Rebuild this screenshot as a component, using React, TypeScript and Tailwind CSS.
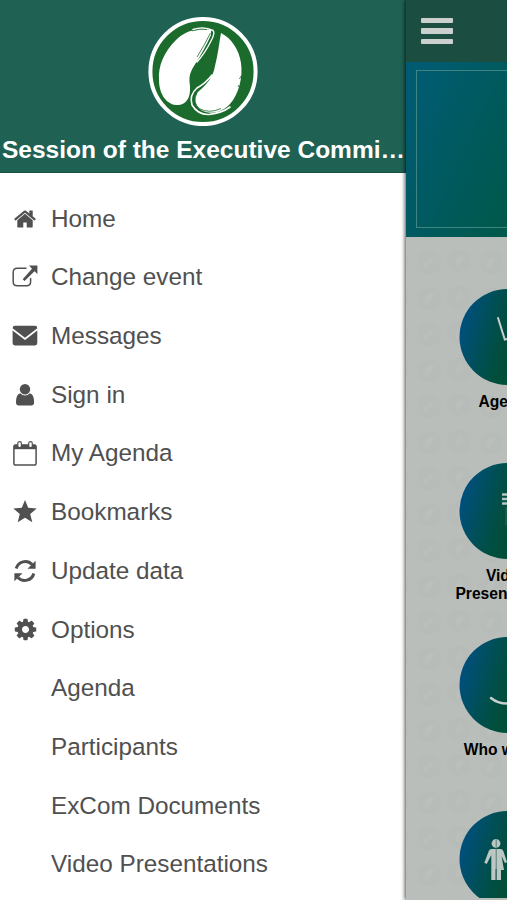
import React from 'react';
import type { ReactNode } from 'react';
import { clsx } from 'clsx';

type GlyphProps = { children: ReactNode; viewBox?: string; className?: string };

const Glyph = ({ children, viewBox = '0 0 26 26', className }: GlyphProps) => (
  <svg
    viewBox={viewBox}
    className={clsx('shrink-0', className ?? 'size-[26px]')}
    fill="currentColor"
    aria-hidden="true"
  >
    {children}
  </svg>
);

const HomeIcon = () => (
  <Glyph viewBox="0 0 1792 1792" className="size-6">
    <path d="M1472 992v480q0 26-19 45t-45 19h-384v-384h-256v384h-384q-26 0-45-19t-19-45v-480q0-1 .5-3t.5-3l575-474 575 474q1 2 1 6zm223-69l-62 74q-8 9-21 11h-3q-13 0-21-7l-692-577-692 577q-12 8-24 7-13-2-21-11l-62-74q-8-10-7-23.5t11-21.5l719-599q32-26 76-26t76 26l244 204v-195q0-14 9-23t23-9h192q14 0 23 9t9 23v408l219 182q10 8 11 21.5t-7 23.5z" />
  </Glyph>
);

const ExternalIcon = () => (
  <Glyph>
    <path
      d="M14.5 3.2H5.2Q1.2 3.2 1.2 7.2v9.6q0 4 4 4h9.4q4 0 4-4V13"
      fill="none"
      stroke="currentColor"
      strokeWidth="1.5"
    />
    <path d="M17 .6H25.400V9L22.500 6.200L12.600 16L10.700 14.200L20 3.700Z" />
  </Glyph>
);

const EnvelopeIcon = () => (
  <Glyph>
    <path d="M3 2.800h20q2.300 0 2.300 2.400L13 14.800.600 5.200Q.600 2.800 3 2.800Z" />
    <path d="M.600 7.600 13 17 25.300 7.600V20q0 2.400-2.300 2.400H3Q.600 22.400.600 20Z" />
  </Glyph>
);

const UserIcon = () => (
  <Glyph>
    <circle cx="13" cy="7.200" r="5.200" />
    <path d="M8.200 11.200Q4 12.400 4 20.200q0 3.200 2.900 3.200H19.100q3 0 3-3.200 0-7.800-4.300-9-1.900 2.400-4.800 2.400T8.200 11.200Z" />
  </Glyph>
);

const CalendarIcon = () => (
  <Glyph>
    <rect x="1.900" y="3.900" width="22.200" height="20.200" rx="1.800" fill="none" stroke="currentColor" strokeWidth="1.500" />
    <path d="M2 3.900h22v4.300H2Z" />
    <rect x="5.800" y=".7" width="3.600" height="6" rx="1.700" fill="white" stroke="currentColor" strokeWidth="1.200" />
    <rect x="16.700" y=".7" width="3.600" height="6" rx="1.700" fill="white" stroke="currentColor" strokeWidth="1.200" />
  </Glyph>
);

const StarIcon = () => (
  <Glyph>
    <path d="M13 .9 16.200 8.800 24.700 9.500 18.200 14.900 20.300 23.200 13 18.700 5.700 23.200 7.800 14.900 1.300 9.500 9.800 8.800Z" />
  </Glyph>
);

const RefreshIcon = () => (
  <Glyph>
    <path
      d="M4.200 10.500A9.400 9.400 0 0 1 20.100 6.500M21.800 15.500A9.400 9.400 0 0 1 5.900 19.500"
      fill="none"
      stroke="currentColor"
      strokeWidth="3"
    />
    <path d="M23.600 2.700V10.800H15.500ZM2.400 23.300V15.200H10.500Z" />
  </Glyph>
);

const CogIcon = () => (
  <Glyph viewBox="0 0 1792 1792" className="size-[25px]">
    <path d="M1152 896q0-106-75-181t-181-75-181 75-75 181 75 181 181 75 181-75 75-181zm512-109v222q0 12-8 23t-20 13l-185 28q-19 54-39 91 35 50 107 138 10 12 10 25t-9 23q-27 37-99 108t-94 71q-12 0-26-9l-138-108q-44 23-91 38-16 136-29 186-7 28-36 28h-222q-14 0-24.5-8.5t-11.5-21.5l-28-184q-49-16-90-37l-141 107q-10 9-25 9-14 0-25-11-126-114-165-168-7-10-7-23 0-12 8-23 15-21 51-66.5t54-70.5q-27-50-41-99l-183-27q-13-2-21-12.5t-8-23.5v-222q0-12 8-23t19-13l186-28q14-46 39-92-40-57-107-138-10-12-10-24 0-10 9-23 26-36 98.5-107.5t94.5-71.5q13 0 26 10l138 107q44-23 91-38 16-136 29-186 7-28 36-28h222q14 0 24.5 8.5t11.5 21.5l28 184q49 16 90 37l142-107q9-9 24-9 13 0 25 10 129 119 165 170 7 8 7 22 0 12-8 23-15 21-51 66.5t-54 70.5q26 50 41 98l183 28q13 2 21 12.5t8 23.5z" />
  </Glyph>
);

type MenuItem = { label: string; icon?: ReactNode };

const menu: MenuItem[] = [
  { label: 'Home', icon: <HomeIcon /> },
  { label: 'Change event', icon: <ExternalIcon /> },
  { label: 'Messages', icon: <EnvelopeIcon /> },
  { label: 'Sign in', icon: <UserIcon /> },
  { label: 'My Agenda', icon: <CalendarIcon /> },
  { label: 'Bookmarks', icon: <StarIcon /> },
  { label: 'Update data', icon: <RefreshIcon /> },
  { label: 'Options', icon: <CogIcon /> },
  { label: 'Agenda' },
  { label: 'Participants' },
  { label: 'ExCom Documents' },
  { label: 'Video Presentations' },
];

// Two brushed lobes inside a ring
const Logo = () => (
  <svg viewBox="0 0 110 110" className="size-[110px] shrink-0" aria-hidden="true">
    <circle cx="55" cy="55.5" r="52.6" fill="#1b6b2c" stroke="white" strokeWidth="4" />
    <g fill="white">
      <path d="M63 14C50 11 37 15 28 24C16 36 10 50 11 64C11 76 17 88 28 89C37 90 43 83 42 70C41 62 41 58 46 50C53 39 58 30 63 19Z" />
      <path d="M73 17C83 22 91 33 93 47C95 61 91 78 82 88C74 97 61 99 53 94C46 89 45 80 51 75C58 69 65 62 67 50C70 38 71 28 73 17Z" />
    </g>
    <g fill="none" stroke="white" strokeLinecap="round">
      <path d="M45 13.5Q56 10 65 14.500Q67.500 17 63 25Q57 37 49 46" strokeWidth="1.4" />
      <path d="M64 59Q58 67 49 72Q41 79 44 89Q50 99 61 98.500Q74 97 82 91" strokeWidth="1.6" />
    </g>
    <path
      d="M62.500 17Q56 30 49 41M44 14.800Q52 12.500 59 13.500M49 77Q44 86 51 92.500Q61 98 73 92.500M91.500 63L93 60M90 71L91 69"
      fill="none"
      stroke="#1b6b2c"
      strokeWidth=".8"
    />
  </svg>
);

const SideMenu = () => (
  <aside className="flex w-[406px] shrink-0 flex-col bg-white">
    <header className="flex h-[173px] flex-col items-center border-b border-[#17533f] bg-[#1f6153] pt-4">
      <Logo />
      <h1 className="mt-2 w-full truncate pl-0.5 text-[24.5px] leading-8 font-bold text-white">
        Session of the Executive Committee
      </h1>
    </header>
    <nav className="pt-[16.5px]">
      {menu.map(({ label, icon }) => (
        <a key={label} className="flex h-[58.71px] items-center gap-[13px] pl-3 text-[24.3px] text-[#505050]">
          <span className="flex w-[26px] shrink-0 justify-center">{icon}</span>
          {label}
        </a>
      ))}
    </nav>
  </aside>
);

const tiles: { id: string; lines: string[]; art: ReactNode }[] = [
  {
    id: 'agenda',
    lines: ['Agenda'],
    art: <path d="M38.300 28.300 45.300 50.500 47.500 50" fill="none" stroke="#c9cfcd" strokeWidth="2" />,
  },
  {
    id: 'video',
    lines: ['Video', 'Presentations'],
    art: (
      <g fill="none" stroke="#b5c6c1">
        <path d="M42.500 31.500h10M42.500 36h10M42.500 40.500h10" strokeWidth="2.400" />
        <path d="M46.500 44v18" strokeWidth="1" opacity=".25" />
      </g>
    ),
  },
  {
    id: 'who',
    lines: ['Who we are'],
    art: (
      <path d="M31.500 61Q38 66.500 47.500 66.500T63.500 61" fill="none" stroke="#c9cfcd" strokeWidth="2.400" strokeLinecap="round" />
    ),
  },
  {
    id: 'people',
    lines: [],
    art: (
      <g fill="#bcc7c4">
        <circle cx="36.500" cy="32.500" r="4.400" />
        <path d="M32 38h9q2 0 2.800 2l3.700 11-2 1.200-3.500-7.200 2.500 14h-3v10h-4.400V58h-1v11h-4.300V44l-4.600 9-2.400-1.300 4.600-12Q30 38 32 38Z" />
        <path d="M36.700 28v41" stroke="#3d6b66" strokeWidth=".8" />
      </g>
    ),
  },
];

// Faint seed-shaped texture behind the tiles
const PanelTexture = () => (
  <svg className="absolute inset-0 -z-10 size-full opacity-40" aria-hidden="true">
    <defs>
      <pattern id="texture" width="62" height="36" patternUnits="userSpaceOnUse" patternTransform="translate(7 8)">
        <circle cx="16" cy="18" r="12" fill="#b0b6b2" opacity=".4" />
        <path d="M11 22Q12 12 20 12Q20 18 14 23Z" fill="#c5c9c6" opacity=".5" />
        <circle cx="46" cy="16" r="12" fill="#b0b6b2" opacity=".4" />
        <path d="M43 20Q41 11 50 11Q50 17 45 21Z" fill="#c5c9c6" opacity=".5" />
      </pattern>
    </defs>
    <rect width="100%" height="100%" fill="url(#texture)" />
  </svg>
);

const MainPanel = () => (
  <main className="relative z-10 flex min-w-0 flex-1 flex-col bg-[#b9bebb] shadow-[-1px_0_4px_rgba(0,0,0,0.7)]">
    <div className="h-full overflow-hidden">
      <div className="flex h-full w-[202px] flex-col">
        <div className="flex h-[62px] shrink-0 items-center bg-[#1b4e41] pl-[15px]">
          <div className="flex w-8 flex-col gap-[5px]">
            <span className="h-[5.6px] rounded-[1px] bg-[#cbd0ce]" />
            <span className="h-[5.6px] rounded-[1px] bg-[#cbd0ce]" />
            <span className="h-[5.6px] rounded-[1px] bg-[#cbd0ce]" />
          </div>
        </div>
        <div className="h-[175px] shrink-0 bg-linear-[115deg,#005b70_10%,#00594f_55%,#005632] px-2.5 pt-2 pb-[9px]">
          <div className="h-full border border-[#3f8583]" />
        </div>
        <div className="relative isolate mb-0.5 flex flex-1 flex-col items-center overflow-hidden pt-[51.5px]">
          <PanelTexture />
          {tiles.map(({ id, lines, art }) => (
            <section key={id} className="flex h-[174px] shrink-0 flex-col items-center">
              <div className="size-24 translate-x-[0.5px] rounded-full bg-linear-[105deg,#004f86_4%,#004f55_32%,#004e3c_48%,#00532f]">
                <svg viewBox="0 0 96 96" className="size-full" aria-hidden="true">
                  {art}
                </svg>
              </div>
              <p className="mt-2 text-center text-[15.6px] leading-[18px] font-bold text-black">
                {lines.map((line) => (
                  <span key={line} className="block">
                    {line}
                  </span>
                ))}
              </p>
            </section>
          ))}
        </div>
      </div>
    </div>
  </main>
);

export default function App() {
  return (
    <div className="flex h-[900px] w-[507px] overflow-hidden font-['Liberation_Sans',Arial,sans-serif]">
      <SideMenu />
      <MainPanel />
    </div>
  );
}
